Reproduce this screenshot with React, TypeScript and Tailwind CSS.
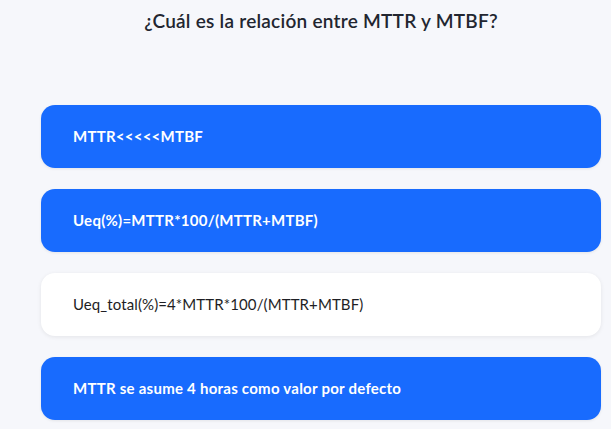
import React from "react";

const items = [
  { text: "MTTR<<<<<MTBF", active: true },
  { text: "Ueq(%)=MTTR*100/(MTTR+MTBF)", active: true },
  { text: "Ueq_total(%)=4*MTTR*100/(MTTR+MTBF)", active: false },
  { text: "MTTR se asume 4 horas como valor por defecto", active: true },
];

export default function App() {
  return (
    <div
      className="min-h-[429px] w-full bg-[#f6f7fb]"
      style={{ fontFamily: '"Lato", "Noto Sans", sans-serif' }}
    >
      <div className="ml-[41px] w-[560px] pt-[8px]">
        <h1 className="text-center text-[19px] font-semibold leading-[26px] tracking-[0.25px] text-[#222630]">
          ¿Cuál es la relación entre MTTR y MTBF?
        </h1>
        <div className="mt-[71px] flex flex-col gap-[21px]">
          {items.map((it, i) => (
            <div
              key={i}
              className={
                it.active
                  ? "flex h-[63px] items-center rounded-[14px] bg-[#186bfe] px-[32px] text-[15px] font-bold tracking-[0.25px] text-white shadow-[0_1px_3px_rgba(0,0,0,0.08)]"
                  : "flex h-[63px] items-center rounded-[14px] bg-white px-[32px] text-[15px] font-normal tracking-[0.1px] text-[#1e1e24] shadow-[0_1px_4px_rgba(0,0,0,0.08)]"
              }
            >
              {it.text}
            </div>
          ))}
        </div>
      </div>
    </div>
  );
}
